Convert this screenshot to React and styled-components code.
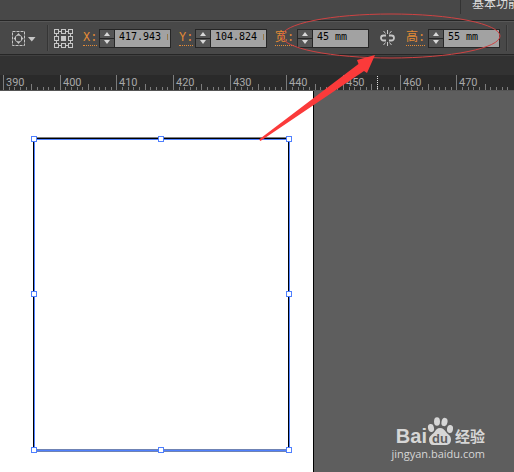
import React, { useState } from "react";
import styled, { createGlobalStyle } from "styled-components";

const colors = {
  panel: "#484848",
  line: "#262626",
  light: "#585858",
  field: "#a2a2a2",
  label: "#e48b36",
  icon: "#c6c6c6",
  select: "#4f80ff",
  mark: "#fb3a3a",
};

const GlobalStyle = createGlobalStyle`
  * {
    box-sizing: border-box;
  }

  body {
    margin: 0;
    font-family: "Liberation Sans", "Noto Sans CJK SC", sans-serif;
    font-size: 12px;
  }
`;

const Page = styled.div`
  position: relative;
  display: flex;
  flex-direction: column;
  min-height: 100vh;
  overflow: hidden;
`;

const TitleBar = styled.header`
  display: flex;
  justify-content: flex-end;
  height: 21px;
  overflow: hidden;
  background-color: ${colors.panel};
  border-bottom: 1px solid ${colors.line};
`;

const WorkspaceBtn = styled.button`
  display: flex;
  align-items: flex-end;
  width: 54px;
  height: 14px;
  padding: 0 0 0 11px;
  overflow: hidden;
  border: none;
  border-left: 1px solid #333333;
  background-color: transparent;
  color: #dddddd;
  font-family: "Noto Sans CJK SC", sans-serif;
  font-size: 12px;
  line-height: 22px;
  white-space: nowrap;
`;

const Toolbar = styled.div`
  display: flex;
  align-items: center;
  height: 34px;
  padding-left: 12px;
  overflow: hidden;
  background-color: ${colors.panel};
  border-top: 1px solid ${colors.light};
  border-bottom: 1px solid ${colors.line};
`;

const IconBtn = styled.button`
  display: flex;
  align-items: center;
  flex: none;
  width: ${(props) => props.$width}px;
  height: 19px;
  padding: 0;
  border: none;
  background-color: transparent;
`;

const Divider = styled.span`
  flex: none;
  width: 2px;
  height: 26px;
  margin: 0 5px 0 11px;
  border-left: 1px solid #353535;
  border-right: 1px solid #505050;
`;

const EndDivider = styled(Divider)`
  margin: 0 0 0 6px;
`;

const Field = styled.div`
  display: flex;
  align-items: center;
  flex: none;
  margin-left: ${(props) => props.$gap}px;
`;

const LabelCtn = styled.div`
  display: flex;
  width: ${(props) => (props.$wide ? 22 : 16)}px;
`;

const Label = styled.label`
  height: 15px;
  border-bottom: 1px dotted ${colors.label};
  color: ${colors.label};
  font-family: "Liberation Mono", "Noto Sans CJK SC", monospace;
  font-size: 12px;
  line-height: 14px;
  white-space: nowrap;
`;

const Spinner = styled.div`
  display: flex;
  width: 72px;
  height: 19px;
  border: 1px solid ${colors.line};
  background-color: ${colors.line};
`;

const Steps = styled.div`
  display: flex;
  flex-direction: column;
  gap: 1px;
  width: 14px;
  margin-right: 1px;
`;

const StepBtn = styled.button`
  display: flex;
  align-items: center;
  justify-content: center;
  height: 8px;
  padding: 0;
  border: none;
  background-color: #565656;
`;

const InputEl = styled.input`
  flex: 1;
  min-width: 0;
  padding: 0 2px 3px 4px;
  border: none;
  border-radius: 0;
  background-color: ${colors.field};
  color: #000000;
  font-family: "DejaVu Sans Mono", monospace;
  font-size: 10px;

  &:focus {
    outline: none;
  }
`;

const TabStrip = styled.div`
  height: 20px;
  background-color: #323232;
  border-top: 1px solid #404040;
`;

const RulerCtn = styled.div`
  height: 16px;
  overflow: hidden;
  background-color: #2a2a2a;
`;

const RulerSvg = styled.svg`
  display: block;
  width: 100%;
  height: 16px;

  text {
    fill: #a8a8a8;
    font-family: Roboto, sans-serif;
    font-size: 11px;
  }
`;

const Canvas = styled.main`
  position: relative;
  display: flex;
  flex: 1;
  background-color: #5e5e5e;
`;

const Artboard = styled.section`
  flex: none;
  width: 314px;
  padding: 45px 0 16px 31px;
  background-color: #ffffff;
  border-right: 1px solid #000000;
`;

const Shape = styled.svg`
  display: block;
`;

const Watermark = styled.a`
  position: absolute;
  right: 29px;
  bottom: 9px;
  display: flex;
  flex-direction: column;
  align-items: flex-end;
  color: #d6d6d6;
  text-decoration: none;
`;

const Brand = styled.span`
  display: flex;
  align-items: flex-end;
  height: 28px;
`;

const BrandName = styled.span`
  font-size: 20px;
  font-weight: bold;
  line-height: 18px;
`;

const BrandSub = styled.span`
  font-family: "Noto Sans CJK SC", sans-serif;
  font-size: 15px;
  font-weight: bold;
  line-height: 18px;
  white-space: nowrap;
`;

const Site = styled.span`
  font-family: "Open Sans", sans-serif;
  font-size: 11px;
  line-height: 18px;
`;

const Annotation = styled.svg`
  position: absolute;
  top: 0;
  left: 0;
  pointer-events: none;
`;

const IsolateIcon = () => (
  <svg width="24" height="15" viewBox="0 0 24 15" aria-hidden="true">
    <g fill="none" stroke={colors.icon}>
      <rect x="0.5" y="0.5" width="12" height="14" strokeDasharray="3 1" />
      <circle cx="6.5" cy="7.5" r="3.5" strokeWidth="0.8" />
    </g>
    <path
      d="M6.5 2l2 2.5h-4zM6.5 13l2-2.5h-4zM1.5 7.5l2.5-2v4zM11.5 7.5l-2.5-2v4z"
      fill={colors.icon}
    />
    <path d="M16 6h7.5l-3.7 4.5z" fill={colors.icon} />
  </svg>
);

const cells = [0, 7, 14];

const ReferenceIcon = () => (
  <svg width="19" height="19" shapeRendering="crispEdges" aria-hidden="true">
    <path
      d="M5 2.5h2M12 2.5h2M5 16.5h2M12 16.5h2M2.5 5v2M2.5 12v2M16.5 5v2M16.5 12v2"
      stroke={colors.icon}
    />
    {cells.map((y) =>
      cells.map((x) => (
        <rect
          key={`${x}-${y}`}
          x={x + 0.5}
          y={y + 0.5}
          width="4"
          height="4"
          stroke={colors.icon}
          fill={x === 7 && y === 7 ? colors.icon : "none"}
        />
      ))
    )}
  </svg>
);

const UnlinkIcon = () => (
  <svg width="15" height="16" viewBox="0 0 15 16" aria-hidden="true">
    <g fill="none" stroke={colors.icon}>
      <path
        d="M6 5.500H3.500a2.500 2.500 0 0 0 0 5H6M9 5.500h2.500a2.500 2.500 0 0 1 0 5H9"
        strokeWidth="1.8"
      />
      <path d="M7.5 0v4M3.5 1l2 2.5M11.5 1l-2 2.500M7.5 12v4M3.5 15l2-2.500M11.5 15l-2-2.500" />
    </g>
  </svg>
);

const PawIcon = () => (
  <svg width="28" height="28" viewBox="0 0 28 28" aria-hidden="true">
    <g fill="#d6d6d6">
      <ellipse cx="4" cy="11" rx="3" ry="4" transform="rotate(-12 4 11)" />
      <ellipse cx="10" cy="4.5" rx="3" ry="4.3" />
      <ellipse cx="17.5" cy="5" rx="3" ry="4.2" transform="rotate(12 17.5 5)" />
      <ellipse cx="23" cy="12" rx="3" ry="4" transform="rotate(8 23 12)" />
      <path d="M13 11c3 0 4.500 2 6 4 2 2.500 5 3.500 5 7.500s-2.500 5.500-5.500 5.500h-12C3.500 28 2 26 2 22.500s3.500-5 5.500-7.500c1.500-2 2.500-4 5.500-4z" />
    </g>
    <text
      x="13"
      y="26"
      textAnchor="middle"
      fill="#5e5e5e"
      fontFamily="Liberation Sans, sans-serif"
      fontSize="13"
      fontWeight="bold"
    >
      du
    </text>
  </svg>
);

const NumberField = ({ id, label, value, gap, wide }) => {
  const [text, setText] = useState(value);

  const handleChange = (event) => {
    setText(event.target.value);
  };

  const step = (amount) => {
    const next = Math.round((parseFloat(text) + amount) * 1000) / 1000;
    setText(`${next} mm`);
  };

  return (
    <Field $gap={gap}>
      <LabelCtn $wide={wide}>
        <Label htmlFor={id}>{label}:</Label>
      </LabelCtn>
      <Spinner>
        <Steps>
          <StepBtn aria-label={`${label} +`} onClick={() => step(1)}>
            <svg width="8" height="5">
              <path d="M4 1l3 4H1z" fill="#d8d8d8" />
            </svg>
          </StepBtn>
          <StepBtn aria-label={`${label} -`} onClick={() => step(-1)}>
            <svg width="8" height="5">
              <path d="M4 4l3-4H1z" fill="#d8d8d8" />
            </svg>
          </StepBtn>
        </Steps>
        <InputEl id={id} type="text" value={text} onChange={handleChange} />
      </Spinner>
    </Field>
  );
};

const majors = [390, 400, 410, 420, 430, 440, 450, 460, 470];
const majorGap = 170 / 3;

const Ruler = () => (
  <RulerCtn>
    <RulerSvg>
      <g shapeRendering="crispEdges" stroke="#7c7c7c">
        {majors.map((mark, i) =>
          Array.from({ length: 10 }, (_, n) => {
            const x = Math.round(3 + i * majorGap + (n * majorGap) / 10) + 0.5;
            const top = n === 0 ? 0 : n === 5 ? 9 : 12;
            return <line key={`${mark}-${n}`} x1={x} x2={x} y1={top} y2="15" />;
          })
        )}
        <line x1="0" x2="100%" y1="15.5" y2="15.5" stroke="#555555" />
        <line
          x1="377.5"
          x2="377.5"
          y1="1"
          y2="15"
          stroke="#e0e0e0"
          strokeDasharray="1 1"
        />
      </g>
      {majors.map((mark, i) => (
        <text key={mark} x={Math.round(3 + i * majorGap) + 3} y="11">
          {mark}
        </text>
      ))}
    </RulerSvg>
  </RulerCtn>
);

const handles = [
  [0, 0],
  [127, 0],
  [255, 0],
  [0, 155],
  [255, 155],
  [0, 311],
  [127, 311],
  [255, 311],
];

const SelectedShape = () => (
  <Shape width="262" height="318" shapeRendering="crispEdges">
    <rect x="2" y="1" width="256" height="1" fill="#808080" />
    <rect x="2" y="2" width="256" height="1" fill="#000000" />
    <rect x="2" y="3" width="1" height="311" fill="#000000" />
    <rect x="257" y="3" width="1" height="311" fill="#000000" />
    <rect x="3" y="313" width="255" height="3" fill="#6f83b4" />
    <path
      d="M3.500 3.500h255v311h-255z"
      fill="none"
      stroke={colors.select}
    />
    {handles.map(([x, y]) => (
      <rect
        key={`${x}-${y}`}
        x={x + 0.5}
        y={y + 0.5}
        width="5"
        height="5"
        fill="#ffffff"
        stroke={colors.select}
      />
    ))}
  </Shape>
);

const App = () => {
  return (
    <Page>
      <GlobalStyle />
      <TitleBar>
        <WorkspaceBtn>基本功能</WorkspaceBtn>
      </TitleBar>
      <Toolbar>
        <IconBtn $width={24} aria-label="isolate">
          <IsolateIcon />
        </IconBtn>
        <Divider />
        <IconBtn $width={19} aria-label="reference point">
          <ReferenceIcon />
        </IconBtn>
        <NumberField id="x" label="X" value="417.943 mm" gap={10} />
        <NumberField id="y" label="Y" value="104.824 mm" gap={8} />
        <NumberField id="width" label="宽" value="45 mm" gap={8} wide />
        <Field $gap={11}>
          <IconBtn $width={15} aria-label="link">
            <UnlinkIcon />
          </IconBtn>
        </Field>
        <NumberField id="height" label="高" value="55 mm" gap={11} wide />
        <EndDivider />
      </Toolbar>
      <TabStrip />
      <Ruler />
      <Canvas>
        <Artboard>
          <SelectedShape />
        </Artboard>
        <Watermark href="#">
          <Brand>
            <BrandName>Bai</BrandName>
            <PawIcon />
            <BrandSub>经验</BrandSub>
          </Brand>
          <Site>jingyan.baidu.com</Site>
        </Watermark>
      </Canvas>
      <Annotation width="514" height="150">
        <ellipse
          cx="391"
          cy="36"
          rx="109"
          ry="22"
          fill="none"
          stroke="#cf4343"
        />
        <path
          d="M375 55L357 60l1.500 4L259 139.500l1.500 1.500L364 71l3 2z"
          fill={colors.mark}
        />
      </Annotation>
    </Page>
  );
};

export default App;
